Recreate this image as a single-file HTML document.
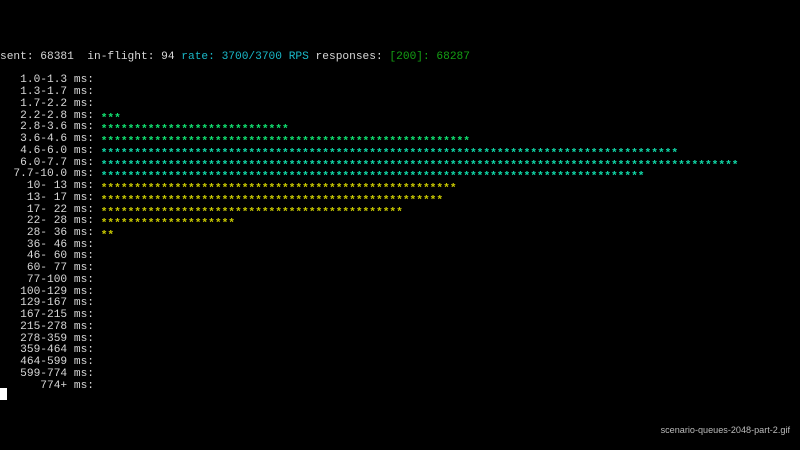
<!DOCTYPE html>
<html><head><meta charset="utf-8"><style>
html,body{margin:0;padding:0;background:#000;width:800px;height:450px;overflow:hidden}
pre{position:absolute;left:0;top:52px;margin:0;font-family:"Liberation Mono",monospace;font-size:11.2px;line-height:11.73px;color:#d8d8d8;letter-spacing:0}
.c{color:#1ab8c8}.g{color:#14a014}
.a,.t,.y{font-weight:bold;position:relative;top:3px}
.a{color:#10e070}.t{color:#10d8a8}.y{color:#c8c800}
.cur{position:absolute;left:0;top:388px;width:7px;height:12px;background:#fff}
.wm{position:absolute;right:10px;top:425px;font-family:"Liberation Sans",sans-serif;font-size:9.1px;color:#bbb}
</style></head><body>
<pre>sent: 68381  in-flight: 94 <span class="c">rate: 3700/3700 RPS</span> responses: <span class="g">[200]: 68287</span>

   1.0-1.3 ms:
   1.3-1.7 ms:
   1.7-2.2 ms:
   2.2-2.8 ms: <span class="a">***</span>
   2.8-3.6 ms: <span class="a">****************************</span>
   3.6-4.6 ms: <span class="a">*******************************************************</span>
   4.6-6.0 ms: <span class="t">**************************************************************************************</span>
   6.0-7.7 ms: <span class="t">***********************************************************************************************</span>
  7.7-10.0 ms: <span class="t">*********************************************************************************</span>
    10- 13 ms: <span class="y">*****************************************************</span>
    13- 17 ms: <span class="y">***************************************************</span>
    17- 22 ms: <span class="y">*********************************************</span>
    22- 28 ms: <span class="y">********************</span>
    28- 36 ms: <span class="y">**</span>
    36- 46 ms:
    46- 60 ms:
    60- 77 ms:
    77-100 ms:
   100-129 ms:
   129-167 ms:
   167-215 ms:
   215-278 ms:
   278-359 ms:
   359-464 ms:
   464-599 ms:
   599-774 ms:
      774+ ms:</pre>
<div class="cur"></div>
<div class="wm">scenario-queues-2048-part-2.gif</div>
</body></html>
